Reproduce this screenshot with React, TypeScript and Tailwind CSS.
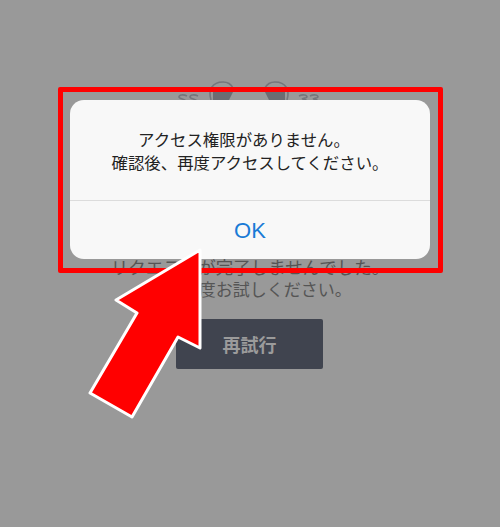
const cjk = "font-['Noto_Sans_CJK_JP','Noto_Sans',sans-serif]";

function Mascot() {
  return (
    <svg width="160" height="30" viewBox="0 0 160 30" fill="none" stroke="#75767c" strokeWidth="1.6">
      <path d="M41 25C38 15 42 7 53 7C58 7 61 9 63 13" />
      <path d="M117 25C120 15 116 7 105 7C100 7 97 9 95 13" />
      <path d="M43 15L64 15L59 25L43 25Z" fill="#6b6c72" stroke="none" />
      <path d="M115 15L94 15L99 25L115 25Z" fill="#6b6c72" stroke="none" />
      <path d="M63 13C74 15 84 15 95 13" />
      <path d="M17 21C13 19 9 20 9 22C9 24 15 24 16 26" />
      <path d="M28 21C24 19 20 20 20 22C20 24 26 24 27 26" />
      <path d="M129 21C133 19 137 20 137 22C137 23 134 23 132 24C135 24 137 25 136 26" />
      <path d="M140 21C144 19 148 20 148 22C148 23 145 23 143 24C146 24 148 25 147 26" />
    </svg>
  );
}

export default function App() {
  return (
    <div className={`relative h-[527px] w-[500px] overflow-hidden bg-[#999999] ${cjk}`}>
      {/* page behind the dimmed overlay */}
      <div className="flex flex-col items-center pt-[75px]">
        <Mascot />
        <div className="mt-[151px] text-center text-[17px] leading-[22px] text-[#555555]">
          <p className="text-[17.5px]">リクエストが完了しませんでした。</p>
          <p>もう一度お試しください。</p>
        </div>
        <button className="mr-[1px] mt-[19px] h-[50px] w-[147px] rounded-[2px] bg-[#40444f] text-[18px] font-bold text-[#9b9b9b]">
          再試行
        </button>
      </div>

      {/* red frame around the alert */}
      <div className="absolute left-[58px] top-[87px] h-[186px] w-[385px] rounded-[2px] border-[5px] border-[#ff0000]" />

      {/* alert */}
      <div className="absolute left-[70px] top-[100px] flex h-[159px] w-[360px] flex-col rounded-[14px] bg-[#f8f8f8]">
        <div className="flex h-[100px] flex-col items-center justify-center pt-[2px] text-[16.4px] leading-[23px] text-[#222222]">
          <p className="pr-[12px]">アクセス権限がありません。</p>
          <p>確認後、再度アクセスしてください。</p>
        </div>
        <div className="flex flex-1 items-center justify-center border-t border-[#dcdcdc] font-['Liberation_Sans',sans-serif] text-[22px] text-[#1a7bd6]">
          OK
        </div>
      </div>

      {/* arrow */}
      <svg className="absolute left-[80px] top-[240px]" width="130" height="185" viewBox="0 0 130 185">
        <path
          d="M120 10L36 60L57 73L10 153L52 177L98 97L120 108Z"
          fill="#ff0000"
          stroke="#ffffff"
          strokeWidth="3"
          strokeLinejoin="round"
        />
      </svg>
    </div>
  );
}
